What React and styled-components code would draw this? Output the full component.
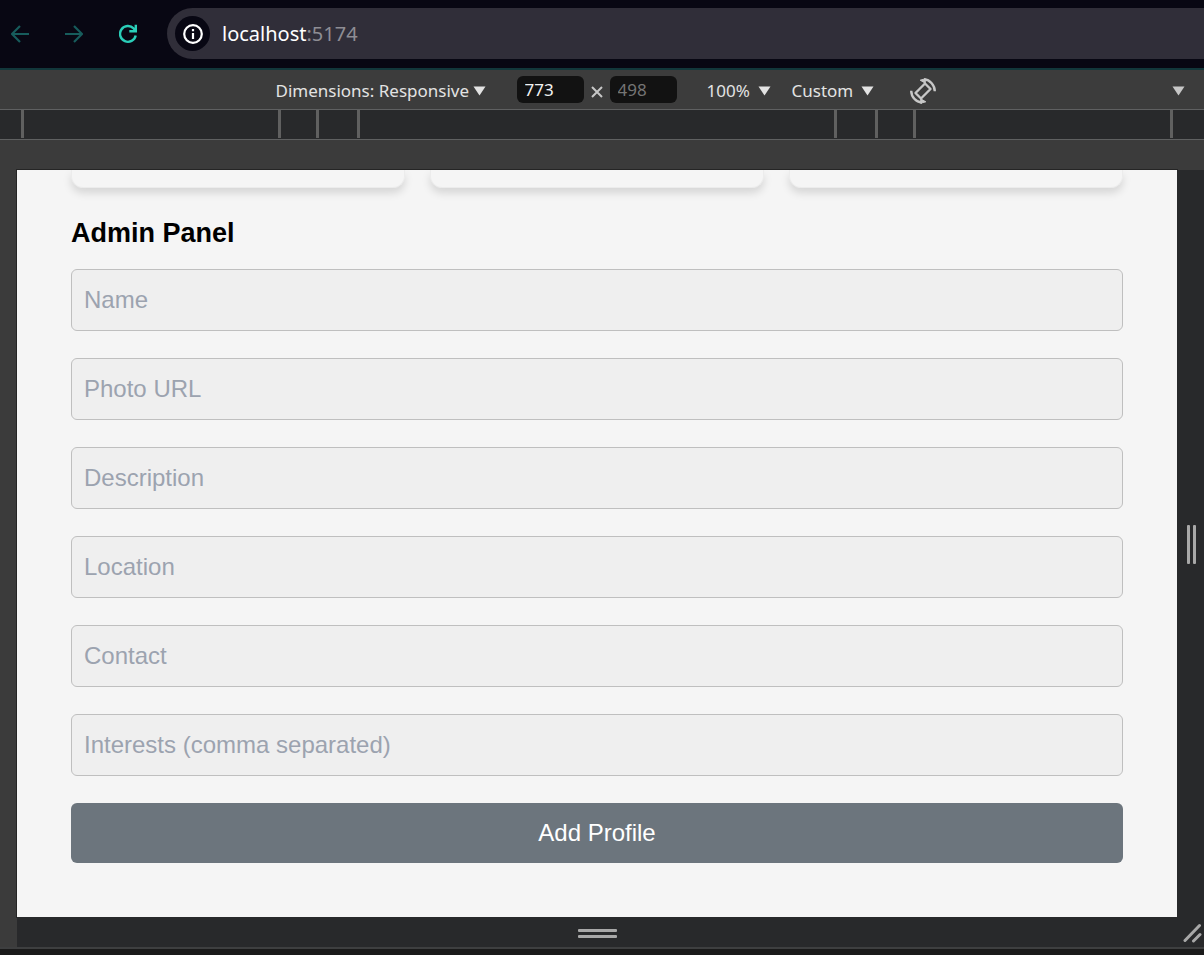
import React from "react";
import styled, { createGlobalStyle } from "styled-components";

const GlobalStyle = createGlobalStyle`
  *, *::before, *::after { box-sizing: border-box; }
  body { margin: 0; background: #1a1a1a; font-family: "Noto Sans", "Liberation Sans", sans-serif; }
  button, input, select { font: inherit; margin: 0; }
`;

const Page = styled.div`
  display: flex;
  flex-direction: column;
  min-height: 100vh;
  padding-bottom: 6px;
`;

const NavBar = styled.nav`
  display: flex;
  align-items: center;
  gap: 36px;
  height: 70px;
  padding: 0 0 1px 11px;
  background: #080713;
  border-bottom: 2px solid #12373b;
`;

const IconButton = styled.button`
  display: flex;
  align-items: center;
  justify-content: center;
  padding: 0;
  border: 0;
  background: none;
  color: ${(p) => p.$color};
  svg { display: block; }
`;

const AddressBar = styled.form`
  display: flex;
  flex: 1;
  align-items: center;
  gap: 12px;
  height: 51px;
  margin-left: -6px;
  padding-left: 8px;
  border-radius: 26px 0 0 26px;
  background: #302e39;
`;

const SiteInfo = styled(IconButton)`
  width: 35px;
  height: 35px;
  border-radius: 50%;
  background: #080713;
`;

const Address = styled.a`
  font-size: 20px;
  line-height: 28px;
  color: #fff;
  text-decoration: none;
`;

const Port = styled.span`
  color: #8e8d94;
`;

const Toolbar = styled.header`
  display: grid;
  grid-template-columns: 1fr auto 1fr;
  align-items: center;
  height: 40px;
  padding: 2px 19px 0 27px;
  background: #3c3c3c;
  border-bottom: 1px solid #5f6061;
`;

const Controls = styled.div`
  display: flex;
  grid-column: 2;
  align-items: center;
`;

const SelectBox = styled.label`
  position: relative;
  width: ${(p) => p.$width}px;
  margin-right: ${(p) => p.$gap}px;
  color: #e3e3e3;
`;

const Select = styled.select`
  display: block;
  width: 100%;
  height: 28px;
  padding: 0;
  border: 0;
  appearance: none;
  background: none;
  color: inherit;
  font-size: 17px;
  line-height: 28px;
`;

const SelectArrow = styled.span`
  position: absolute;
  top: 9px;
  right: 0;
  pointer-events: none;
  svg { display: block; }
`;

const SizeInput = styled.input`
  width: 67px;
  height: 27px;
  padding: 0 8px;
  border: 0;
  border-radius: 6px;
  background: #121212;
  color: #f2f2f2;
  font-size: 17px;
  &::placeholder { color: #757575; opacity: 1; }
`;

const SizeGroup = styled.div`
  display: flex;
  margin-right: 30px;
  padding-bottom: 3px;
`;

const Times = styled.span`
  display: flex;
  align-items: center;
  justify-content: center;
  width: 26px;
  padding-top: 6px;
`;

const MoreButton = styled(IconButton)`
  grid-column: 3;
  justify-self: end;
`;

const Ruler = styled.div`
  display: flex;
  justify-content: center;
  height: 30px;
  padding: 0 10px 1px 0;
  background: #28292b;
  border-bottom: 1px solid #5f6061;
`;

const RulerStep = styled.div`
  width: ${(p) => p.$width}px;
  border-left: 3px solid #606060;
`;

const Stage = styled.div`
  display: grid;
  flex: 1;
  grid-template-columns: 17px minmax(0, 1fr) 27px;
  grid-template-rows: 30px 1fr 30px;
  background: #3b3b3b;
  border-bottom: 2px solid #3e3f40;
`;

const Viewport = styled.main`
  grid-area: 2 / 2;
  overflow: hidden;
  padding: 0 54px 54px;
  background: #f5f5f5;
  font-family: "Liberation Sans", Arial, sans-serif;
`;

const ViewportEdge = styled.div`
  grid-area: 2 / 2;
  box-shadow: 0 0 0 1px #252525;
`;

const SideResizer = styled.div`
  display: flex;
  grid-area: 2 / 3;
  align-items: center;
  justify-content: center;
  gap: 3px;
  padding: 2px 0 0 2px;
  background: #28292b;
`;

const BottomResizer = styled.div`
  display: flex;
  grid-area: 3 / 2;
  flex-direction: column;
  align-items: center;
  justify-content: center;
  gap: 3px;
  padding-top: 3px;
  background: #28292b;
`;

const CornerResizer = styled.div`
  display: flex;
  grid-area: 3 / 3;
  align-items: flex-end;
  justify-content: flex-end;
  padding: 0 2px 4px 0;
  background: #28292b;
`;

const Grip = styled.span`
  width: ${(p) => (p.$vertical ? 3 : 39)}px;
  height: ${(p) => (p.$vertical ? 39 : 3)}px;
  border-radius: 1px;
  background: #a8a8a8;
`;

const CardRow = styled.div`
  display: grid;
  grid-template-columns: repeat(3, 1fr);
  gap: 25px;
`;

const Card = styled.article`
  height: 18px;
  border: 1px solid #ececec;
  border-top: 0;
  border-radius: 0 0 12px 12px;
  background: #f5f5f5;
  box-shadow: 0 5px 9px rgba(0, 0, 0, 0.13);
`;

const Title = styled.h1`
  margin: 27px 0 18px;
  font-size: 27px;
  font-weight: 700;
  line-height: 36px;
  color: #000;
`;

const ProfileForm = styled.form`
  display: flex;
  flex-direction: column;
  gap: 27px;
`;

const Field = styled.input`
  width: 100%;
  height: 62px;
  padding: 0 12px;
  border: 1px solid #bfbfbf;
  border-radius: 6px;
  background: #efefef;
  color: #111;
  font-size: 24px;
  &::placeholder { color: #9ca3af; opacity: 1; }
`;

const SubmitButton = styled.button`
  height: 60px;
  border: 0;
  border-radius: 6px;
  background: #6c757d;
  color: #fff;
  font-size: 24px;
`;

const Triangle = () => (
  <svg width="13" height="10" viewBox="0 0 13 10" aria-hidden="true">
    <path d="M0.5 0.5h12L6.5 9.5z" fill="currentColor" />
  </svg>
);

const Arrow = ({ forward }) => (
  <svg width="18" height="18" viewBox="0 0 18 18" fill="none" stroke="currentColor" strokeWidth="2.2" aria-hidden="true">
    <path d={forward ? "M0 9h17M9 1l8 8-8 8" : "M18 9H1M9 1L1 9l8 8"} />
  </svg>
);

const Reload = () => (
  <svg width="18" height="20" viewBox="0 0 18 20" fill="none" stroke="currentColor" strokeWidth="2.4" aria-hidden="true">
    <path d="M16.7 11.500A7.900 7.900 0 1 1 14.600 4.400L16.500 6.600" />
    <path d="M16.800 0.800v6.500h-6.500" />
  </svg>
);

const Info = () => (
  <svg width="20" height="20" viewBox="0 0 20 20" fill="none" stroke="currentColor" strokeWidth="2.2" aria-hidden="true">
    <circle cx="10" cy="10" r="8.8" />
    <path d="M10 9v6M10 5v2.2" />
  </svg>
);

const Rotate = () => (
  <svg width="28" height="28" viewBox="0 0 28 28" fill="none" stroke="currentColor" strokeWidth="2.400" strokeLinejoin="round" aria-hidden="true">
    <path d="M16 6.500l5.500 5.500L12 21.500l-5.500-5.500z" />
    <path d="M15 2.300C21.200 3 25.700 8 25.800 14.300M13 25.700C6.800 25 2.300 20 2.200 13.700" />
    <path d="M11.200 3.200L16.300 1.800V6.200zM16.800 24.800L11.700 26.200V21.800z" fill="currentColor" strokeWidth="1" />
  </svg>
);

const fields = ["Name", "Photo URL", "Description", "Location", "Contact", "Interests (comma separated)"];
const rulerSteps = [257, 38, 41, 477, 41, 38, 257, 3];

function ToolbarSelect({ label, value, width, gap }) {
  return (
    <SelectBox $width={width} $gap={gap}>
      <Select aria-label={label} defaultValue={value}>
        <option>{value}</option>
      </Select>
      <SelectArrow><Triangle /></SelectArrow>
    </SelectBox>
  );
}

export default function App() {
  return (
    <Page>
      <GlobalStyle />
      <NavBar>
        <IconButton $color="#175c5c" aria-label="Back"><Arrow /></IconButton>
        <IconButton $color="#175c5c" aria-label="Forward"><Arrow forward /></IconButton>
        <IconButton $color="#2acdb8" aria-label="Reload"><Reload /></IconButton>
        <AddressBar>
          <SiteInfo type="button" $color="#fff" aria-label="Site information"><Info /></SiteInfo>
          <Address href="#">localhost<Port>:5174</Port></Address>
        </AddressBar>
      </NavBar>
      <Toolbar>
        <Controls>
          <ToolbarSelect label="Dimensions" value="Dimensions: Responsive" width={210} gap={31} />
          <SizeGroup>
            <SizeInput aria-label="Width" defaultValue="773" />
            <Times>
              <svg width="12" height="12" viewBox="0 0 12 12" stroke="#c7c7c7" strokeWidth="2" aria-hidden="true">
                <path d="M1 1l10 10M11 1L1 11" />
              </svg>
            </Times>
            <SizeInput aria-label="Height" placeholder="498" />
          </SizeGroup>
          <ToolbarSelect label="Zoom" value="100%" width={64} gap={21} />
          <ToolbarSelect label="Throttling" value="Custom" width={82} gap={35} />
          <IconButton $color="#c7c7c7" aria-label="Rotate"><Rotate /></IconButton>
        </Controls>
        <MoreButton $color="#c7c7c7" aria-label="More options"><Triangle /></MoreButton>
      </Toolbar>
      <Ruler>
        {rulerSteps.map((width, i) => <RulerStep key={i} $width={width} />)}
      </Ruler>
      <Stage>
        <ViewportEdge />
        <Viewport>
          <CardRow>
            <Card />
            <Card />
            <Card />
          </CardRow>
          <Title>Admin Panel</Title>
          <ProfileForm>
            {fields.map((name) => <Field key={name} aria-label={name} placeholder={name} />)}
            <SubmitButton type="button">Add Profile</SubmitButton>
          </ProfileForm>
        </Viewport>
        <SideResizer><Grip $vertical /><Grip $vertical /></SideResizer>
        <BottomResizer><Grip /><Grip /></BottomResizer>
        <CornerResizer>
          <svg width="20" height="20" viewBox="0 0 20 20" stroke="#a8a8a8" strokeWidth="3" strokeLinecap="round" aria-hidden="true">
            <path d="M3 17.500L17.500 2.500M11.500 18L18 11.500" />
          </svg>
        </CornerResizer>
      </Stage>
    </Page>
  );
}
